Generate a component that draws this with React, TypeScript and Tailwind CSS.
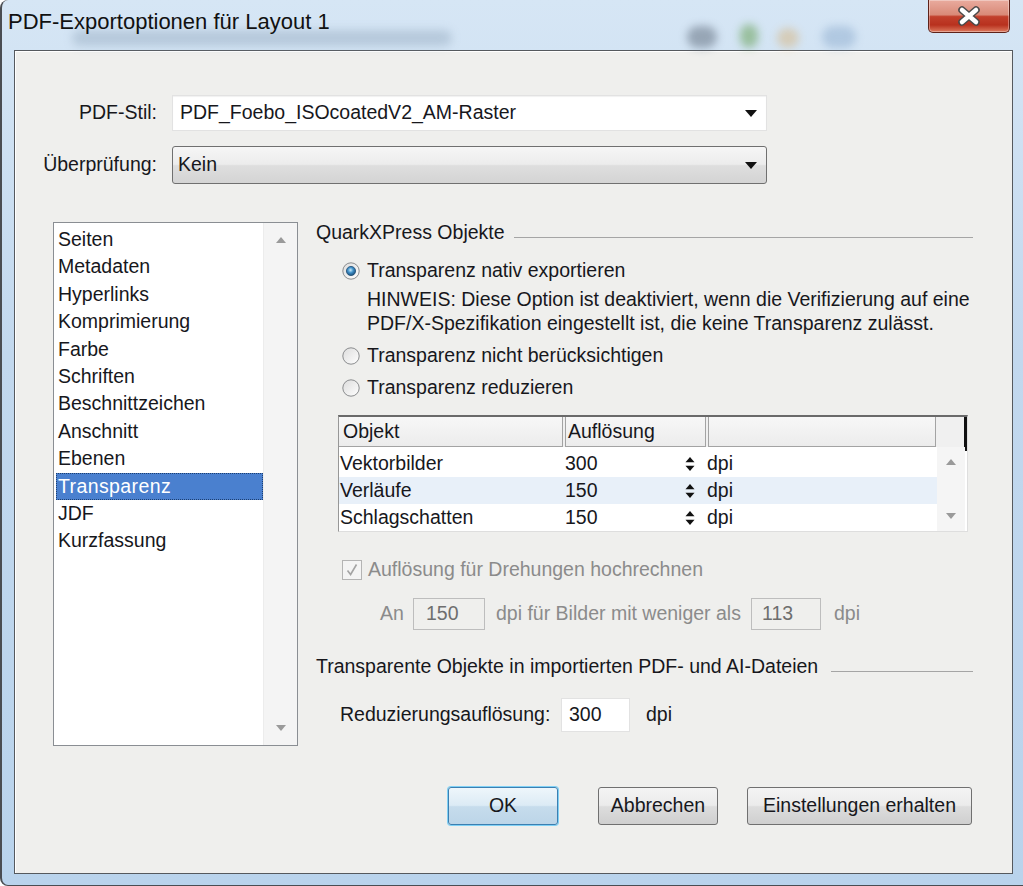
import React from "react";

const listItems = [
  "Seiten",
  "Metadaten",
  "Hyperlinks",
  "Komprimierung",
  "Farbe",
  "Schriften",
  "Beschnittzeichen",
  "Anschnitt",
  "Ebenen",
  "Transparenz",
  "JDF",
  "Kurzfassung",
];

const tableRows = [
  { name: "Vektorbilder", value: "300", alt: false },
  { name: "Verläufe", value: "150", alt: true },
  { name: "Schlagschatten", value: "150", alt: false },
];

const DropArrow = () => (
  <svg width="12" height="7" viewBox="0 0 12 7">
    <path d="M0 0H12L6 7Z" fill="#111" />
  </svg>
);

const ScrollArrow = ({ down }: { down?: boolean }) => (
  <svg width="10" height="6" viewBox="0 0 10 6">
    <path d={down ? "M0 0H10L5 6Z" : "M5 0L10 6H0Z"} fill="#9a9a9a" />
  </svg>
);

const Spinner = () => (
  <svg width="10" height="14" viewBox="0 0 10 14">
    <path d="M5 0L9.5 5.2H0.5Z" fill="#111" />
    <path d="M0.5 8.8H9.5L5 14Z" fill="#111" />
  </svg>
);

const Radio = ({ checked, id }: { checked?: boolean; id: string }) => (
  <svg width="18" height="18" viewBox="0 0 18 18" className="shrink-0">
    <defs>
      <linearGradient id={`ring-${id}`} x1="0" y1="0" x2="1" y2="1">
        <stop offset="0" stopColor="#dcdcdc" />
        <stop offset="1" stopColor="#ffffff" />
      </linearGradient>
      <radialGradient id={`dot-${id}`} cx="45%" cy="40%" r="65%">
        <stop offset="0" stopColor="#c9ecfb" />
        <stop offset="0.45" stopColor="#3f8fc8" />
        <stop offset="1" stopColor="#17466e" />
      </radialGradient>
    </defs>
    <circle cx="9" cy="9" r="8.2" fill={`url(#ring-${id})`} stroke="#8a8c8e" strokeWidth="1" />
    {checked && <circle cx="9" cy="9" r="4.6" fill={`url(#dot-${id})`} stroke="#1f4f77" strokeWidth="0.8" />}
  </svg>
);

const DisabledCheck = () => (
  <svg width="20" height="20" viewBox="0 0 20 20" className="shrink-0">
    <rect x="0.5" y="0.5" width="19" height="19" fill="#f4f4f4" stroke="#b4b4b4" />
    <path d="M5.5 10.5L8.6 14.5L14.5 4.5" fill="none" stroke="#a4a4a4" strokeWidth="1.6" />
  </svg>
);

const Button = ({ label, width, primary }: { label: string; width: string; primary?: boolean }) => (
  <div
    className={`${width} h-[38px] flex items-center justify-center rounded-[3px] border ${
      primary
        ? "border-[#3c7fb1] shadow-[0_0_0_1px_#7fd0f5] bg-[linear-gradient(180deg,#eef6fb_0%,#dcebf5_48%,#c6dcec_52%,#bcd5e8_100%)]"
        : "border-[#707070] bg-[linear-gradient(180deg,#f4f4f4_0%,#ebebeb_48%,#dddddd_52%,#cfcfcf_100%)]"
    }`}
  >
    {label}
  </div>
);

export default function App() {
  return (
    <div className="w-[1023px] h-[886px] overflow-hidden flex flex-col rounded-tl-[8px] rounded-bl-[8px] border-l-2 border-b border-[#4a4d52] bg-[linear-gradient(180deg,#d6e6f5_0%,#c2d8ee_40%,#b9d3ec_100%)] font-['Liberation_Sans',Arial,sans-serif] text-[19.5px] text-[#17171c]">
      {/* title bar */}
      <div className="relative h-[50px] shrink-0">
        <div className="absolute left-[70px] top-[30px] w-[380px] h-[16px] rounded-full bg-[#8aa0b6] opacity-40 blur-[5px]" />
        <div className="absolute left-[685px] top-[26px] w-[30px] h-[22px] rounded-full bg-[#5b6878] opacity-50 blur-[4px]" />
        <div className="absolute left-[738px] top-[24px] w-[18px] h-[24px] rounded-full bg-[#5f9b4a] opacity-50 blur-[4px]" />
        <div className="absolute left-[775px] top-[28px] w-[22px] h-[20px] rounded-full bg-[#d7a860] opacity-40 blur-[4px]" />
        <div className="absolute left-[820px] top-[26px] w-[34px] h-[22px] rounded-full bg-[#7d9fc5] opacity-40 blur-[4px]" />
        <div className="relative pl-[6px] pt-[9px] text-[22px] leading-[26px] text-[#111]">
          PDF-Exportoptionen für Layout 1
        </div>
        <div className="absolute right-[13px] top-0 w-[82px] h-[33px] rounded-b-[5px] border border-t-0 border-[#5e2219] bg-[linear-gradient(180deg,#e9ab9e_0%,#d98a78_46%,#c2402c_52%,#b8311e_78%,#dd7a5e_100%)] flex items-center justify-center shadow-[inset_0_0_0_1px_rgba(255,255,255,0.35)]">
          <svg width="26" height="20" viewBox="0 0 26 20">
            <path d="M6 4L20 16M20 4L6 16" stroke="#4a4a4a" strokeWidth="7.5" strokeLinecap="round" />
            <path d="M6 4L20 16M20 4L6 16" stroke="#ffffff" strokeWidth="4.5" strokeLinecap="round" />
          </svg>
        </div>
      </div>

      {/* client area */}
      <div className="ml-[12px] mr-[10px] h-[824px] shrink-0 border border-[#55595e] bg-[#efefed] shadow-[inset_1px_1px_0_#ffffff] flex flex-col">
        {/* PDF-Stil */}
        <div className="mt-[44px] flex items-center">
          <div className="w-[142px] text-right">PDF-Stil:</div>
          <div className="ml-[15px] w-[595px] h-[36px] bg-white border border-[#e2e2e2] shadow-[inset_0_1px_1px_rgba(0,0,0,0.06)] flex items-center justify-between pl-[7px] pr-[9px]">
            <span>PDF_Foebo_ISOcoatedV2_AM-Raster</span>
            <DropArrow />
          </div>
        </div>

        {/* Überprüfung */}
        <div className="mt-[15px] flex items-center">
          <div className="w-[142px] text-right">Überprüfung:</div>
          <div className="ml-[15px] w-[595px] h-[38px] rounded-[3px] border border-[#707070] bg-[linear-gradient(180deg,#f6f6f6_0%,#ececec_48%,#dedede_52%,#d4d4d4_100%)] flex items-center justify-between pl-[5px] pr-[9px]">
            <span>Kein</span>
            <DropArrow />
          </div>
        </div>

        {/* main */}
        <div className="mt-[38px] flex">
          {/* list box */}
          <div className="ml-[38px] w-[245px] h-[524px] border border-[#8a8e93] bg-white flex">
            <div className="flex-1 pt-[3px] pl-[2px]">
              {listItems.map((item) =>
                item === "Transparenz" ? (
                  <div
                    key={item}
                    className="h-[27.4px] leading-[25px] bg-[#4a80cf] text-white pl-[1px] border border-dotted border-[#1d3f70] tracking-[0.4px]"
                  >
                    {item}
                  </div>
                ) : (
                  <div key={item} className="h-[27.4px] leading-[27.4px] pl-[2px]">
                    {item}
                  </div>
                )
              )}
            </div>
            <div className="w-[34px] bg-[#f4f4f4] border-l border-[#ececec] flex flex-col items-center justify-between py-[14px]">
              <ScrollArrow />
              <ScrollArrow down />
            </div>
          </div>

          {/* right panel */}
          <div className="ml-[18px] w-[657px] flex flex-col">
            <div className="h-[20px] flex items-start">
              <span className="leading-[20px]">QuarkXPress Objekte</span>
              <div className="ml-[9px] mt-[15px] flex-1 h-px bg-[#a5a5a5]" />
            </div>

            <div className="mt-[17px] ml-[26px] h-[24px] flex items-center">
              <Radio checked id="r1" />
              <span className="ml-[7px]">Transparenz nativ exportieren</span>
            </div>
            <div className="mt-[4px] ml-[51px] leading-[24px]">
              <div>HINWEIS: Diese Option ist deaktiviert, wenn die Verifizierung auf eine</div>
              <div>PDF/X-Spezifikation eingestellt ist, die keine Transparenz zulässt.</div>
            </div>
            <div className="mt-[9px] ml-[26px] h-[24px] flex items-center">
              <Radio id="r2" />
              <span className="ml-[7px]">Transparenz nicht berücksichtigen</span>
            </div>
            <div className="mt-[8px] ml-[26px] h-[24px] flex items-center">
              <Radio id="r3" />
              <span className="ml-[7px]">Transparenz reduzieren</span>
            </div>

            {/* table */}
            <div className="mt-[15px] ml-[22px] w-[630px] h-[117px] border-t-2 border-t-[#6a6a6a] border-l border-l-[#979797] border-r border-r-[#dedede] border-b border-b-[#dedede] bg-white flex flex-col">
              <div className="h-[30px] flex bg-[#f0f0f0]">
                <div className="w-[224px] pl-[4px] leading-[28px] border-r border-b border-[#a3a3a3] bg-[linear-gradient(180deg,#f7f7f7,#ececec)]">
                  Objekt
                </div>
                <div className="ml-[2px] w-[141px] pl-[2px] leading-[28px] border-l border-r border-b border-[#a3a3a3] bg-[linear-gradient(180deg,#f7f7f7,#ececec)]">
                  Auflösung
                </div>
                <div className="ml-[2px] w-[228px] border-l border-r border-b border-[#a3a3a3] bg-[linear-gradient(180deg,#f7f7f7,#ececec)]" />
                <div className="flex-1 flex justify-end">
                  <div className="w-[3px] h-[34px] bg-[#111]" />
                </div>
              </div>
              <div className="flex flex-1">
                <div className="w-[598px] pt-[3px]">
                  {tableRows.map((row) => (
                    <div
                      key={row.name}
                      className={`h-[27px] flex items-center ${row.alt ? "bg-[#e8f0f9]" : "bg-white"}`}
                    >
                      <span className="w-[226px] pl-[1px]">{row.name}</span>
                      <span className="w-[120px]">{row.value}</span>
                      <Spinner />
                      <span className="ml-[12px]">dpi</span>
                    </div>
                  ))}
                </div>
                <div className="flex-1 bg-[#f5f5f5] flex flex-col items-center justify-between pt-[12px] pb-[12px] mr-[2px]">
                  <ScrollArrow />
                  <ScrollArrow down />
                </div>
              </div>
            </div>

            {/* disabled checkbox */}
            <div className="mt-[26px] ml-[26px] h-[24px] flex items-center text-[#8b8b8b]">
              <DisabledCheck />
              <span className="ml-[6px]">Auflösung für Drehungen hochrechnen</span>
            </div>
            <div className="mt-[16px] ml-[64px] h-[32px] flex items-center text-[#8b8b8b]">
              <span className="w-[33px]">An</span>
              <div className="w-[72px] h-[32px] border border-[#bdbdbd] flex items-center pl-[12px] text-[#6e6e6e]">
                150
              </div>
              <span className="ml-[11px] w-[255px]">dpi für Bilder mit weniger als</span>
              <div className="w-[70px] h-[32px] border border-[#bdbdbd] flex items-center pl-[10px] text-[#6e6e6e]">
                113
              </div>
              <span className="ml-[13px]">dpi</span>
            </div>

            {/* imported PDF section */}
            <div className="mt-[26px] h-[20px] flex items-start">
              <span className="leading-[20px]">Transparente Objekte in importierten PDF- und AI-Dateien</span>
              <div className="ml-[13px] mt-[15px] flex-1 h-px bg-[#a5a5a5]" />
            </div>
            <div className="mt-[22px] ml-[24px] h-[34px] flex items-center">
              <span className="w-[221px]">Reduzierungsauflösung:</span>
              <div className="w-[69px] h-[34px] bg-white border border-[#e2e2e2] flex items-center pl-[7px]">300</div>
              <span className="ml-[16px]">dpi</span>
            </div>
          </div>
        </div>

        {/* buttons */}
        <div className="mt-[41px] flex justify-end pr-[40px]">
          <Button label="OK" width="w-[110px]" primary />
          <div className="ml-[40px]">
            <Button label="Abbrechen" width="w-[120px]" />
          </div>
          <div className="ml-[29px]">
            <Button label="Einstellungen erhalten" width="w-[225px]" />
          </div>
        </div>
      </div>
    </div>
  );
}
